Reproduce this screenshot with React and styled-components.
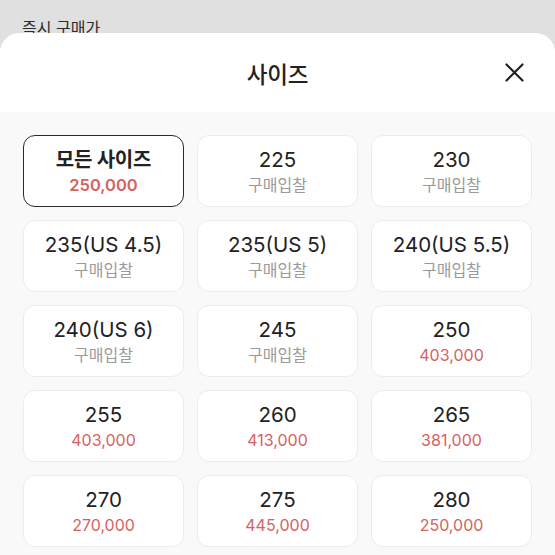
import React from "react";
import styled, { createGlobalStyle } from "styled-components";

const Global = createGlobalStyle`
  html, body { margin: 0; padding: 0; }
  body {
    background: #e0e0e0;
    font-family: Inter, "Noto Sans CJK KR", "Noto Sans", sans-serif;
    -webkit-font-smoothing: antialiased;
  }
`;

const Page = styled.div`
  width: 555px;
  height: 555px;
  overflow: hidden;
  display: flex;
  flex-direction: column;
`;

const Behind = styled.div`
  height: 33px;
  flex: none;
  padding: 18px 0 0 22px;
  box-sizing: border-box;
  font-size: 16px;
  line-height: 20px;
  color: #2c2c2c;
  white-space: nowrap;
  position: relative;
  z-index: 0;
`;

const Sheet = styled.div`
  position: relative;
  z-index: 1;
  flex: 1;
  background: #f9f9f9;
  border-radius: 20px 20px 0 0;
  overflow: hidden;
  display: flex;
  flex-direction: column;
`;

const Header = styled.div`
  height: 79px;
  flex: none;
  background: #fff;
  display: grid;
  grid-template-columns: 1fr auto 1fr;
  align-items: center;
  padding: 0 31px;
`;

const Title = styled.div`
  grid-column: 2;
  font-size: 22.5px;
  font-weight: 500;
  color: #222;
  letter-spacing: -0.2px;
`;

const Close = styled.button`
  grid-column: 3;
  justify-self: end;
  border: 0;
  background: none;
  padding: 0;
  width: 20px;
  height: 20px;
  display: flex;
  align-items: center;
  justify-content: center;
  cursor: pointer;
`;

const Grid = styled.div`
  display: grid;
  grid-template-columns: repeat(3, 1fr);
  grid-auto-rows: 72px;
  gap: 13px;
  padding: 23px 23px;
`;

const Card = styled.div`
  background: #fff;
  border-radius: 12px;
  border: ${(p) => (p.$active ? "1.5px solid #2a2a2a" : "1px solid #ececec")};
  box-sizing: border-box;
  display: flex;
  flex-direction: column;
  align-items: center;
  justify-content: center;
  gap: 2px;
`;

const Size = styled.div`
  font-size: ${(p) => (p.$bold ? "20px" : "20.5px")};
  line-height: 26px;
  color: #222;
  font-weight: ${(p) => (p.$bold ? 700 : 400)};
  letter-spacing: ${(p) => (p.$bold ? "-0.2px" : "0")};
`;

const Sub = styled.div`
  font-size: ${(p) => (p.$bold ? "16.5px" : "16px")};
  line-height: 20px;
  color: ${(p) => (p.$price ? "#d6625f" : "#9a9a9a")};
  font-weight: ${(p) => (p.$bold ? 600 : 400)};
`;

const items = [
  ["모든 사이즈", "250,000", true],
  ["225", null],
  ["230", null],
  ["235(US 4.5)", null],
  ["235(US 5)", null],
  ["240(US 5.5)", null],
  ["240(US 6)", null],
  ["245", null],
  ["250", "403,000"],
  ["255", "403,000"],
  ["260", "413,000"],
  ["265", "381,000"],
  ["270", "270,000"],
  ["275", "445,000"],
  ["280", "250,000"],
];

export default function App() {
  return (
    <Page>
      <Global />
      <Behind>즉시 구매가</Behind>
      <Sheet>
        <Header>
          <Title>사이즈</Title>
          <Close aria-label="닫기">
            <svg width="19" height="19" viewBox="0 0 19 19">
              <path d="M1.5 1.5 L17.5 17.5 M17.5 1.5 L1.5 17.5" stroke="#222" strokeWidth="2.2" strokeLinecap="round" fill="none" />
            </svg>
          </Close>
        </Header>
        <Grid>
          {items.map(([size, price, active]) => (
            <Card key={size} $active={active}>
              <Size $bold={active}>{size}</Size>
              <Sub $price={!!price} $bold={active}>{price || "구매입찰"}</Sub>
            </Card>
          ))}
        </Grid>
      </Sheet>
    </Page>
  );
}
